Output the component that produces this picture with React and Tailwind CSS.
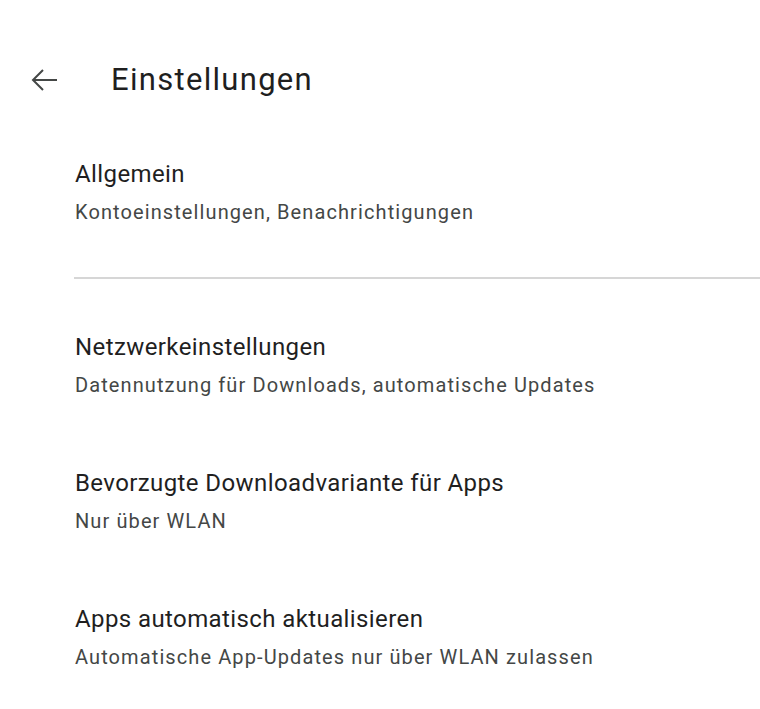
const font = { fontFamily: "Roboto, 'Noto Sans', sans-serif" };

const SettingItem = ({ title, subtitle }) => (
  <div className="flex flex-col">
    <div className="text-[24px] leading-[28px] tracking-[0.4px] text-[#1f1f1f]">{title}</div>
    <div className="mt-3 text-[20px] leading-[24px] tracking-[1.1px] text-[#444746]">{subtitle}</div>
  </div>
);

const App = () => {
  return (
    <div className="min-h-screen w-[760px] bg-white" style={font}>
      <header className="flex h-[160px] items-center">
        <button className="ml-[28px] flex h-[32px] w-[32px] items-center justify-center text-[#444746]">
          <svg width="28" height="24" viewBox="0 0 28 24" fill="none" stroke="currentColor" strokeWidth="2">
            <path d="M27 12H3" />
            <path d="M13 2 3 12l10 10" />
          </svg>
        </button>
        <h1 className="ml-[51px] text-[31px] leading-[36px] tracking-[1.3px] text-[#1f1f1f]">Einstellungen</h1>
      </header>

      <section className="pl-[75px] pb-[53px]">
        <SettingItem title="Allgemein" subtitle="Kontoeinstellungen, Benachrichtigungen" />
      </section>

      <div className="ml-[74px] h-[2px] bg-[#d6d6d6]" />

      <section className="flex flex-col gap-[72px] pl-[75px] pt-[54px]">
        <SettingItem title="Netzwerkeinstellungen" subtitle="Datennutzung für Downloads, automatische Updates" />
        <SettingItem title="Bevorzugte Downloadvariante für Apps" subtitle="Nur über WLAN" />
        <SettingItem title="Apps automatisch aktualisieren" subtitle="Automatische App-Updates nur über WLAN zulassen" />
      </section>
    </div>
  );
};

export default App;
